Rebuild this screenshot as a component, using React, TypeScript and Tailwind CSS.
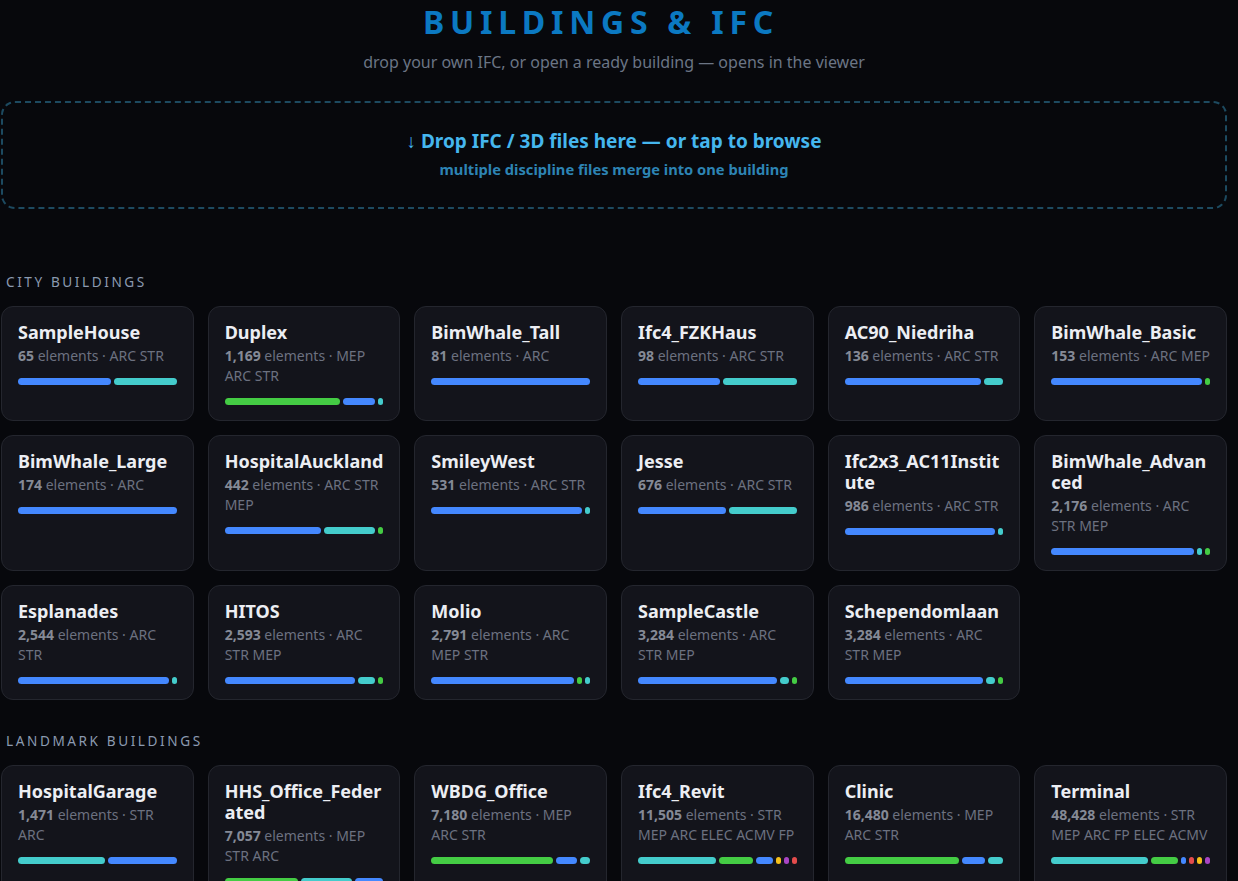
const COLORS: Record<string, string> = {
  ARC: '#4488ff',
  STR: '#44cccc',
  MEP: '#44cc44',
  ELEC: '#f5c01a',
  ACMV: '#a945c4',
  FP: '#e44c4c',
};

type Building = {
  name: string;
  count: string;
  disc: [string, number][];
};

const CITY: Building[] = [
  { name: 'SampleHouse', count: '65', disc: [['ARC', 94], ['STR', 63]] },
  { name: 'Duplex', count: '1,169', disc: [['MEP', 117], ['ARC', 33], ['STR', 0]] },
  { name: 'BimWhale_Tall', count: '81', disc: [['ARC', 1]] },
  { name: 'Ifc4_FZKHaus', count: '98', disc: [['ARC', 83], ['STR', 74]] },
  { name: 'AC90_Niedriha', count: '136', disc: [['ARC', 137], ['STR', 20]] },
  { name: 'BimWhale_Basic', count: '153', disc: [['ARC', 150], ['MEP', 0]] },
  { name: 'BimWhale_Large', count: '174', disc: [['ARC', 1]] },
  { name: 'HospitalAuckland', count: '442', disc: [['ARC', 96], ['STR', 51], ['MEP', 0]] },
  { name: 'SmileyWest', count: '531', disc: [['ARC', 152], ['STR', 0]] },
  { name: 'Jesse', count: '676', disc: [['ARC', 88], ['STR', 68]] },
  { name: 'Ifc2x3_AC11Institute', count: '986', disc: [['ARC', 152], ['STR', 0]] },
  { name: 'BimWhale_Advanced', count: '2,176', disc: [['ARC', 143], ['STR', 0], ['MEP', 0]] },
  { name: 'Esplanades', count: '2,544', disc: [['ARC', 151], ['STR', 0]] },
  { name: 'HITOS', count: '2,593', disc: [['ARC', 132], ['STR', 17], ['MEP', 0]] },
  { name: 'Molio', count: '2,791', disc: [['ARC', 145], ['MEP', 0], ['STR', 0]] },
  { name: 'SampleCastle', count: '3,284', disc: [['ARC', 139], ['STR', 9], ['MEP', 0]] },
  { name: 'Schependomlaan', count: '3,284', disc: [['ARC', 140], ['STR', 9], ['MEP', 0]] },
];

const LANDMARK: Building[] = [
  { name: 'HospitalGarage', count: '1,471', disc: [['STR', 87], ['ARC', 69]] },
  { name: 'HHS_Office_Federated', count: '7,057', disc: [['MEP', 74], ['STR', 51], ['ARC', 29]] },
  { name: 'WBDG_Office', count: '7,180', disc: [['MEP', 122], ['ARC', 21], ['STR', 10]] },
  {
    name: 'Ifc4_Revit',
    count: '11,505',
    disc: [['STR', 79], ['MEP', 34], ['ARC', 17], ['ELEC', 0], ['ACMV', 0], ['FP', 0]],
  },
  { name: 'Clinic', count: '16,480', disc: [['MEP', 117], ['ARC', 23], ['STR', 16]] },
  {
    name: 'Terminal',
    count: '48,428',
    disc: [['STR', 98], ['MEP', 28], ['ARC', 0], ['FP', 0], ['ELEC', 0], ['ACMV', 0]],
  },
];

function Card({ b }: { b: Building }) {
  return (
    <div className="rounded-[12px] border border-[#24262e] bg-[#13141b] px-4 pt-[15px] pb-[15px]">
      <div className="text-[18px] font-bold leading-[21px] text-[#eceef3] break-words">{b.name}</div>
      <div className="mt-[3px] text-[14px] leading-5 text-[#6c7180]">
        <span className="font-bold text-[#858a96]">{b.count}</span> elements · {b.disc.map((d) => d[0]).join(' ')}
      </div>
      <div className="mt-3 flex h-[7px] gap-[3px]">
        {b.disc.map(([k, w]) => (
          <div
            key={k}
            className="rounded-full"
            style={{ flexGrow: w, flexBasis: 0, minWidth: 5, backgroundColor: COLORS[k] }}
          />
        ))}
      </div>
    </div>
  );
}

function Section({ title, items }: { title: string; items: Building[] }) {
  return (
    <div>
      <div className="pl-[5px] text-[13.6px] leading-[17px] tracking-[0.19em] text-[#8b9ab0]">{title}</div>
      <div className="mt-[16px] grid grid-cols-6 gap-[14px]">
        {items.map((b) => (
          <Card key={b.name} b={b} />
        ))}
      </div>
    </div>
  );
}

export default function App() {
  return (
    <div className="min-h-screen bg-[#07080c] font-['Noto_Sans',sans-serif]">
      <div className="ml-[1px] w-[1226px] pt-[3px] pb-10">
        <h1 className="pr-[26px] text-center text-[32px] font-bold leading-[38px] tracking-[0.18em] text-[#0b79c2]">
          BUILDINGS &amp; IFC
        </h1>
        <p className="mt-[10px] text-center text-[16px] leading-[22px] text-[#6b7585]">
          drop your own IFC, or open a ready building — opens in the viewer
        </p>

        <div className="mt-[28px] flex h-[108px] flex-col items-center justify-center rounded-[14px] border-2 border-dashed border-[#1d4a60]">
          <div className="-mt-[2px] text-[19px] font-bold leading-6 text-[#45b6ee]">
            ↓ Drop IFC / 3D files here — or tap to browse
          </div>
          <div className="mt-[6px] text-[14.7px] font-bold leading-5 text-[#2d84b4]">
            multiple discipline files merge into one building
          </div>
        </div>

        <div className="mt-[64px]">
          <Section title="CITY BUILDINGS" items={CITY} />
        </div>
        <div className="mt-[32px]">
          <Section title="LANDMARK BUILDINGS" items={LANDMARK} />
        </div>
      </div>
    </div>
  );
}
